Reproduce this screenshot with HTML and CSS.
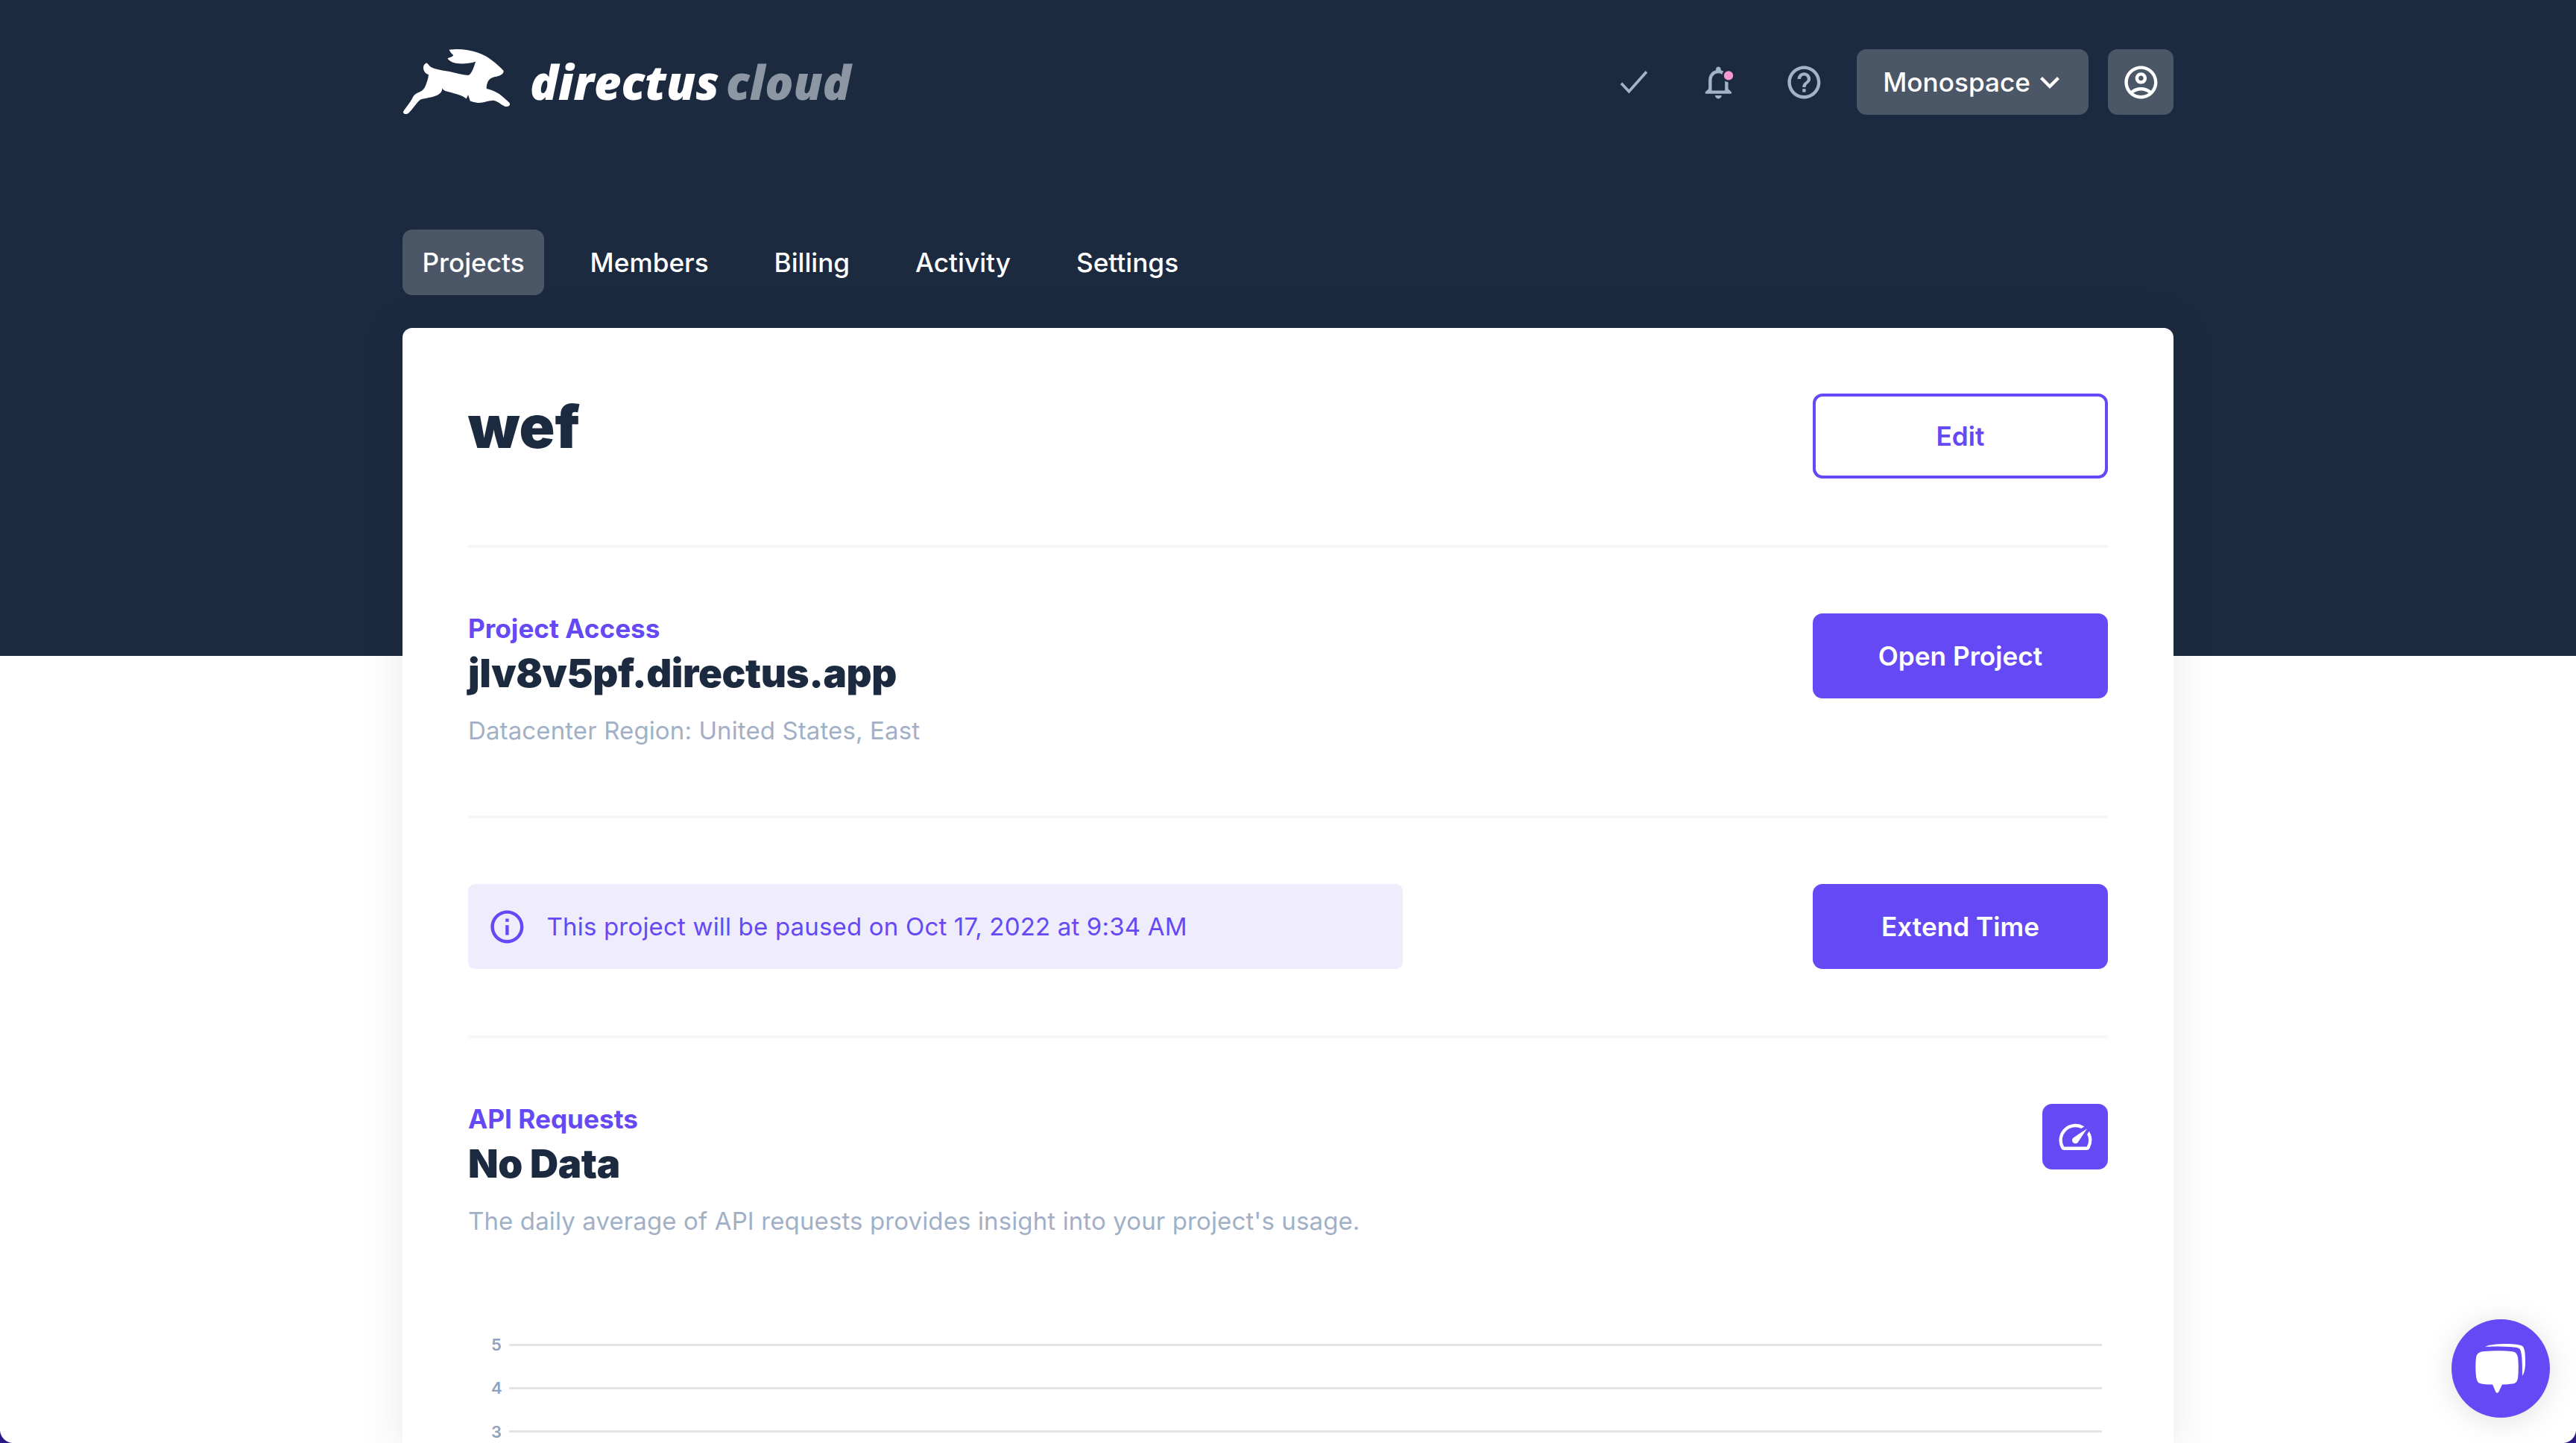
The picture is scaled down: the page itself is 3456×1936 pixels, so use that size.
FILE: index.html
```html
<!DOCTYPE html>
<html lang="en">
<head>
    <meta charset="UTF-8">
    <meta name="viewport" content="width=device-width, initial-scale=1.0">
    <title>Directus Cloud</title>
    <link rel="stylesheet" href="styles.css">
</head>
<body>
    <div class="wrap">
        <header class="topbar">
            <div class="logo">
                <svg class="rabbit" viewBox="30 45 436 270">
                    <path d="M218 50C255 44 300 50 335 62C375 76 410 105 438 135C438 146 428 154 410 158C390 160 376 170 372 185C369 195 368 202 370 208C385 210 410 220 425 232C438 242 452 255 462 265C466 273 458 281 445 279C432 275 415 258 400 255C385 252 355 266 335 264C322 263 312 260 303 257L295 232C292 240 288 246 288 248C270 232 235 226 205 217C197 214 193 210 190 205C190 218 185 226 170 233C150 242 120 245 105 250C90 258 70 292 55 305C45 313 32 310 33 300C40 288 62 262 70 245C75 232 85 225 100 220C112 215 120 205 125 190C130 175 135 162 135 150C122 148 114 135 114 120C116 110 122 103 128 103C134 108 138 115 145 120C165 130 195 134 220 138C245 143 270 152 295 153C308 150 318 120 325 98C300 106 270 108 250 105C235 102 220 97 212 85C222 80 232 79 235 72C228 66 222 58 218 50Z"/>
                </svg>
                <div class="wordmark">directus<span class="cloud">cloud</span></div>
            </div>
            <div class="actions">
                <svg class="icon check" viewBox="0 0 24 24"><path d="M4.6 12.6L9.3 17.6 20 5.6"/></svg>
                <svg class="icon bell" viewBox="0 0 24 24">
                    <path d="M12 22c1.1 0 2-.9 2-2h-4c0 1.1.9 2 2 2zm6-6v-5c0-3.07-1.63-5.64-4.5-6.32V4c0-.83-.67-1.5-1.5-1.5s-1.5.67-1.5 1.5v.68C7.64 5.36 6 7.92 6 11v5l-2 2v1h16v-1l-2-2zm-2 1H8v-6c0-2.48 1.51-4.5 4-4.5s4 2.02 4 4.5v6z"/>
                    <circle class="dot" cx="18.2" cy="7.9" r="3.4"/>
                </svg>
                <svg class="icon help" viewBox="0 0 24 24"><path d="M11 18h2v-2h-2v2zm1-16C6.48 2 2 6.48 2 12s4.48 10 10 10 10-4.48 10-10S17.52 2 12 2zm0 18c-4.41 0-8-3.59-8-8s3.59-8 8-8 8 3.59 8 8-3.59 8-8 8zm0-14c-2.21 0-4 1.79-4 4h2c0-1.1.9-2 2-2s2 .9 2 2c0 2-3 1.75-3 5h2c0-2.25 3-2.5 3-5 0-2.21-1.79-4-4-4z"/></svg>
                <button class="team-btn">Monospace
                    <svg class="chevron" viewBox="0 0 24 24"><path d="M16.59 8.59L12 13.17 7.41 8.59 6 10l6 6 6-6z"/></svg>
                </button>
                <button class="user-btn">
                    <svg class="user-icon" viewBox="0 0 24 24"><path d="M12 2C6.48 2 2 6.48 2 12s4.48 10 10 10 10-4.48 10-10S17.52 2 12 2zM7.35 18.5C8.66 17.56 10.26 17 12 17s3.34.56 4.65 1.5c-1.31.94-2.91 1.5-4.65 1.5s-3.34-.56-4.65-1.5zm10.79-1.38C16.45 15.8 14.32 15 12 15s-4.45.8-6.14 2.12C4.7 15.73 4 13.95 4 12c0-4.42 3.58-8 8-8s8 3.58 8 8c0 1.95-.7 3.73-1.86 5.12zM12 6c-1.93 0-3.5 1.57-3.5 3.5S10.07 13 12 13s3.5-1.57 3.5-3.5S13.93 6 12 6zm0 5c-.83 0-1.5-.67-1.5-1.5S11.17 8 12 8s1.5.67 1.5 1.5S12.83 11 12 11z"/></svg>
                </button>
            </div>
        </header>

        <nav class="tabs">
            <a class="tab active">Projects</a>
            <a class="tab">Members</a>
            <a class="tab">Billing</a>
            <a class="tab">Activity</a>
            <a class="tab">Settings</a>
        </nav>

        <main class="card">
            <section class="row row-first">
                <h1 class="title">wef</h1>
                <button class="btn btn-outline">Edit</button>
            </section>

            <section class="row">
                <div>
                    <div class="label">Project Access</div>
                    <div class="value">jlv8v5pf.directus.app</div>
                    <div class="sub">Datacenter Region: United States, East</div>
                </div>
                <button class="btn">Open Project</button>
            </section>

            <section class="row row-notice">
                <div class="notice">
                    <svg class="notice-icon" viewBox="0 0 24 24"><path d="M11 7h2v2h-2zm0 4h2v6h-2zm1-9C6.48 2 2 6.48 2 12s4.48 10 10 10 10-4.48 10-10S17.52 2 12 2zm0 18c-4.41 0-8-3.59-8-8s3.59-8 8-8 8 3.59 8 8-3.59 8-8 8z"/></svg>
                    This project will be paused on Oct 17, 2022 at 9:34 AM
                </div>
                <button class="btn">Extend Time</button>
            </section>

            <section class="row row-last">
                <div>
                    <div class="label">API Requests</div>
                    <div class="value">No Data</div>
                    <div class="sub">The daily average of API requests provides insight into your project's usage.</div>
                </div>
                <button class="square-btn">
                    <svg class="speed-icon" viewBox="0 0 24 24"><path d="M20.38 8.57l-1.23 1.85a8 8 0 0 1-.22 7.58H5.07A8 8 0 0 1 15.58 6.85l1.85-1.23A10 10 0 0 0 3.35 19a2 2 0 0 0 1.72 1h13.85a2 2 0 0 0 1.74-1 10 10 0 0 0-.27-10.44z"/><path d="M10.59 15.41a2 2 0 0 0 2.83 0l5.66-8.49-8.49 5.66a2 2 0 0 0 0 2.83z"/></svg>
                </button>
            </section>

            <div class="chart">
                <div class="chart-row"><span class="tick">5</span><span class="grid-line"></span></div>
                <div class="chart-row"><span class="tick">4</span><span class="grid-line"></span></div>
                <div class="chart-row"><span class="tick">3</span><span class="grid-line"></span></div>
            </div>
        </main>
    </div>

    <button class="chat-btn">
        <svg class="chat-icon" viewBox="0 0 68 66">
            <path d="M13 4C18 1 28 0 42 0C52 0 60 1 63 3C66 5 67 12 67 24C67 32 66 39 63 43C63 32 63 18 61 10C60 6 58 5 52 4.500C40 3.500 24 3 13 4Z"/>
            <path d="M12 10C24 9 40 9 48 10C54 10.500 56 13 57 18C58 26 58 38 57 46C56 51 54 53 50 53.500C46 54 42 54.500 36 54.500L31 65C30 66 28 66 27.500 65L23 54.500C16 54.500 10 54 6 53C3 52 2 49 1 44C0 36 0 26 1 18C2 13 5 10.500 12 10Z"/>
        </svg>
    </button>

    <div class="corner corner-left"></div>
    <div class="corner corner-right"></div>
</body>
</html>
```

FILE: styles.css
```css
* {
    box-sizing: border-box;
}
html, body {
    height: 100%;
}
body {
    margin: 0;
    overflow: hidden;
    font-family: Inter, "Liberation Sans", sans-serif;
    font-size: 35.2px;
    color: #1c2a40;
    background: linear-gradient(#1c2a40 880px, #fff 880px);
}
button {
    font-family: inherit;
    border: none;
    cursor: pointer;
}
.wrap {
    width: 2376px;
    margin: 0 auto;
    padding-top: 66px;
}

/* top bar */
.topbar {
    display: flex;
    justify-content: space-between;
    align-items: center;
    height: 88px;
}
.logo {
    display: flex;
    align-items: center;
    gap: 26px;
}
.rabbit {
    width: 145px;
    height: 90px;
    fill: #fff;
}
.wordmark {
    font-family: "Open Sans", sans-serif;
    font-style: italic;
    font-weight: 800;
    font-size: 63px;
    line-height: 88px;
    color: #fff;
    display: flex;
    gap: 9px;
}
.cloud {
    color: #8d97a4;
}
.actions {
    display: flex;
    align-items: center;
}
.icon {
    width: 52.8px;
    height: 52.8px;
    fill: #a2b2c9;
    margin-right: 62px;
}
.check {
    fill: none;
    stroke: #a2b2c9;
    stroke-width: 1.7;
}
.help {
    margin-right: 44px;
}
.dot {
    fill: #f49ad0;
    stroke: #1c2a40;
    stroke-width: 1.2;
}
.team-btn {
    display: flex;
    align-items: center;
    justify-content: space-between;
    width: 311px;
    height: 88px;
    padding: 0 26px 0 35.2px;
    font-size: 35.2px;
    font-weight: 500;
    color: #fff;
    background: #4b5767;
    border-radius: 13px;
}
.chevron {
    width: 52.8px;
    height: 52.8px;
    fill: #fff;
}
.user-btn {
    display: flex;
    align-items: center;
    justify-content: center;
    width: 88px;
    height: 88px;
    padding: 0;
    margin-left: 26px;
    background: #4b5767;
    border-radius: 13px;
}
.user-icon {
    width: 52.8px;
    height: 52.8px;
    fill: #fff;
}

/* tabs */
.tabs {
    display: flex;
    gap: 35.2px;
    margin-top: 154px;
    height: 88px;
}
.tab {
    display: flex;
    align-items: center;
    padding: 0 26.4px;
    font-weight: 500;
    color: #fff;
    border-radius: 13px;
}
.tab.active {
    background: #4b5767;
}

/* card */
.card {
    margin-top: 44px;
    padding: 0 88px;
    background: #fff;
    border-radius: 13px 13px 0 0;
    box-shadow: 0 0 60px rgba(28, 42, 64, 0.1);
}
.row {
    display: flex;
    justify-content: space-between;
    align-items: flex-start;
    padding: 88px 0;
    border-bottom: 4px solid #f5f6f7;
}
.row-first {
    padding-bottom: 89px;
}
.row-notice {
    padding-bottom: 89px;
}
.row-last {
    border-bottom: none;
    padding-bottom: 0;
}
.title {
    margin: 0;
    font-size: 79px;
    font-weight: 900;
    line-height: 88px;
}
.label {
    font-weight: 700;
    line-height: 40px;
    color: #6449f4;
}
.value {
    font-size: 52.8px;
    font-weight: 900;
    letter-spacing: -0.4px;
    line-height: 80px;
}
.sub {
    margin-top: 12px;
    font-size: 33px;
    letter-spacing: 0.12px;
    line-height: 51px;
    color: #a2b0c6;
}
.btn {
    width: 396px;
    height: 114px;
    font-size: 35.2px;
    font-weight: 600;
    color: #fff;
    background: #6449f4;
    border-radius: 13px;
}
.btn-outline {
    color: #6449f4;
    background: #fff;
    border: 4px solid #6449f4;
}
.notice {
    display: flex;
    align-items: center;
    gap: 26.4px;
    width: 1254px;
    height: 114px;
    padding-left: 26.4px;
    font-size: 33px;
    letter-spacing: 0.18px;
    color: #6449f4;
    background: #efecfc;
    border-radius: 9px;
}
.notice-icon {
    width: 52.8px;
    height: 52.8px;
    fill: #6449f4;
}
.square-btn {
    display: flex;
    align-items: center;
    justify-content: center;
    width: 88px;
    height: 88px;
    padding: 0;
    background: #6449f4;
    border-radius: 13px;
}
.speed-icon {
    width: 52.8px;
    height: 52.8px;
    fill: #fff;
}

/* chart */
.chart {
    margin-top: 111px;
    padding-right: 8px;
}
.chart-row {
    display: flex;
    align-items: center;
    gap: 10px;
    height: 58.3px;
    padding-left: 31px;
}
.tick {
    width: 14px;
    font-size: 22px;
    font-weight: 600;
    color: #8fa3bd;
}
.grid-line {
    flex: 1;
    height: 3px;
    background: #e2e4e7;
}

/* chat bubble */
.chat-btn {
    position: fixed;
    right: 35px;
    bottom: 34px;
    display: flex;
    align-items: center;
    justify-content: center;
    width: 132px;
    height: 132px;
    padding: 0;
    background: #6449f4;
    border-radius: 50%;
    box-shadow: 0 4px 40px rgba(0, 0, 0, 0.12);
}
.chat-icon {
    width: 68px;
    height: 66px;
    fill: #fff;
}

.corner {
    position: fixed;
    bottom: 0;
    width: 18px;
    height: 18px;
}
.corner-left {
    left: 0;
    background: radial-gradient(circle at 100% 0, transparent 17.5px, #2a1a85 18.5px);
}
.corner-right {
    right: 0;
    background: radial-gradient(circle at 0 0, transparent 17.5px, #2a1a85 18.5px);
}
```
